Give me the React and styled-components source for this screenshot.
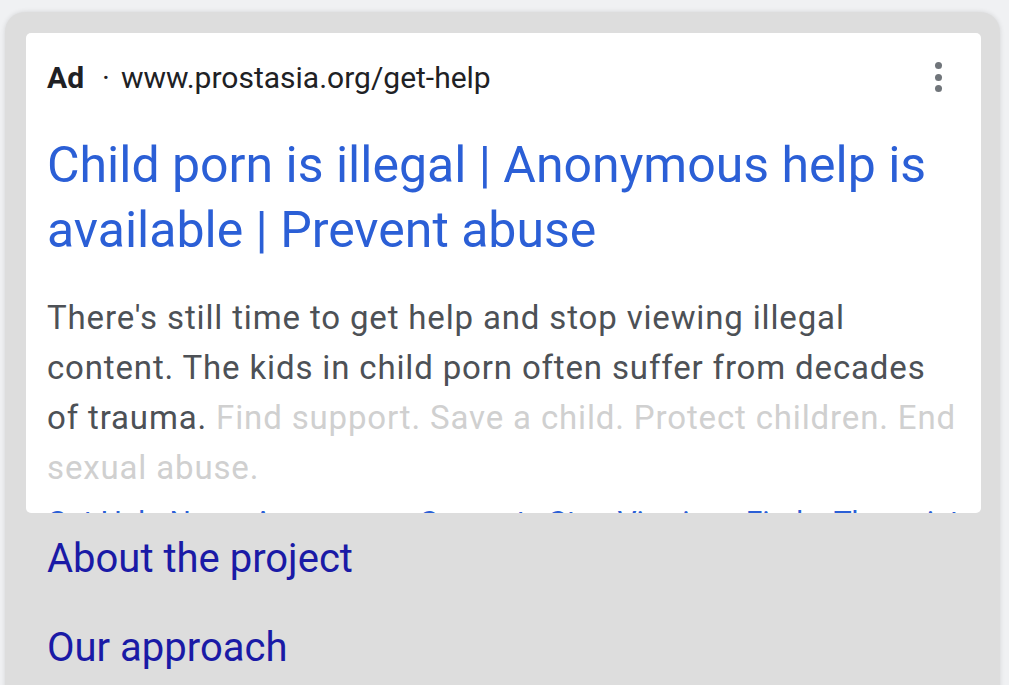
import React from "react";
import styled, { createGlobalStyle } from "styled-components";

const GlobalStyle = createGlobalStyle`
  html, body {
    margin: 0;
    padding: 0;
    background: #f0f1f3;
    font-family: Roboto, "Liberation Sans", Arial, sans-serif;
    overflow: hidden;
  }
`;

const Panel = styled.div`
  margin: 12px 9px 0 5px;
  height: 700px;
  background: #dddddd;
  border-radius: 20px 20px 0 0;
  box-shadow: 0 0 5px rgba(0, 0, 0, 0.12);
  padding: 21px 19px 0 21px;
  box-sizing: border-box;
`;

const AdCard = styled.div`
  background: #fff;
  border-radius: 5px;
  height: 480px;
  overflow: hidden;
  padding: 25px 16px 0 21px;
  box-sizing: border-box;
`;

const AdHeader = styled.div`
  display: flex;
  align-items: center;
  height: 40px;
  font-size: 30px;
  line-height: 40px;
  color: #202124;
`;

const AdLabel = styled.span`
  font-weight: 700;
`;

const Sep = styled.span`
  margin: 0 11px 0 18px;
`;

const Url = styled.span`
  flex: 1;
`;

const MoreButton = styled.div`
  display: flex;
  flex-direction: column;
  gap: 4.5px;
  margin-right: 23px;
  margin-top: -2px;

  span {
    width: 7px;
    height: 7px;
    border-radius: 50%;
    background: #70757a;
  }
`;

const Title = styled.a`
  display: block;
  margin-top: 35px;
  font-size: 50px;
  line-height: 65px;
  color: #2b5fd6;
  text-decoration: none;
`;

const Description = styled.p`
  margin: 30px 0 0;
  font-size: 33px;
  line-height: 50px;
  letter-spacing: 0.85px;
  color: #4d5156;
`;

const Faded = styled.span`
  color: #d0d0d0;
`;

const Sitelinks = styled.div`
  margin-top: 9px;
  font-size: 30px;
  line-height: 40px;
  color: #2b5fd6;
  white-space: nowrap;
`;

const NavLinks = styled.nav`
  display: flex;
  flex-direction: column;
  gap: 39px;
  margin-top: 21px;
  padding-left: 21px;
`;

const NavLink = styled.a`
  font-size: 40px;
  line-height: 50px;
  color: #1a1aa6;
  text-decoration: none;
`;

export default function App() {
  return (
    <>
      <GlobalStyle />
      <Panel>
        <AdCard>
          <AdHeader>
            <AdLabel>Ad</AdLabel>
            <Sep>·</Sep>
            <Url>www.prostasia.org/get-help</Url>
            <MoreButton>
              <span />
              <span />
              <span />
            </MoreButton>
          </AdHeader>
          <Title href="#">
            Child porn is illegal | Anonymous help is available | Prevent abuse
          </Title>
          <Description>
            There's still time to get help and stop viewing illegal content. The
            kids in child porn often suffer from decades of trauma.{" "}
            <Faded>
              Find support. Save a child. Protect children. End sexual abuse.
            </Faded>
          </Description>
          <Sitelinks>
            Get Help Now · Anonymous Support · Stop Viewing · Find a Therapist
          </Sitelinks>
        </AdCard>
        <NavLinks>
          <NavLink href="#">About the project</NavLink>
          <NavLink href="#">Our approach</NavLink>
        </NavLinks>
      </Panel>
    </>
  );
}
